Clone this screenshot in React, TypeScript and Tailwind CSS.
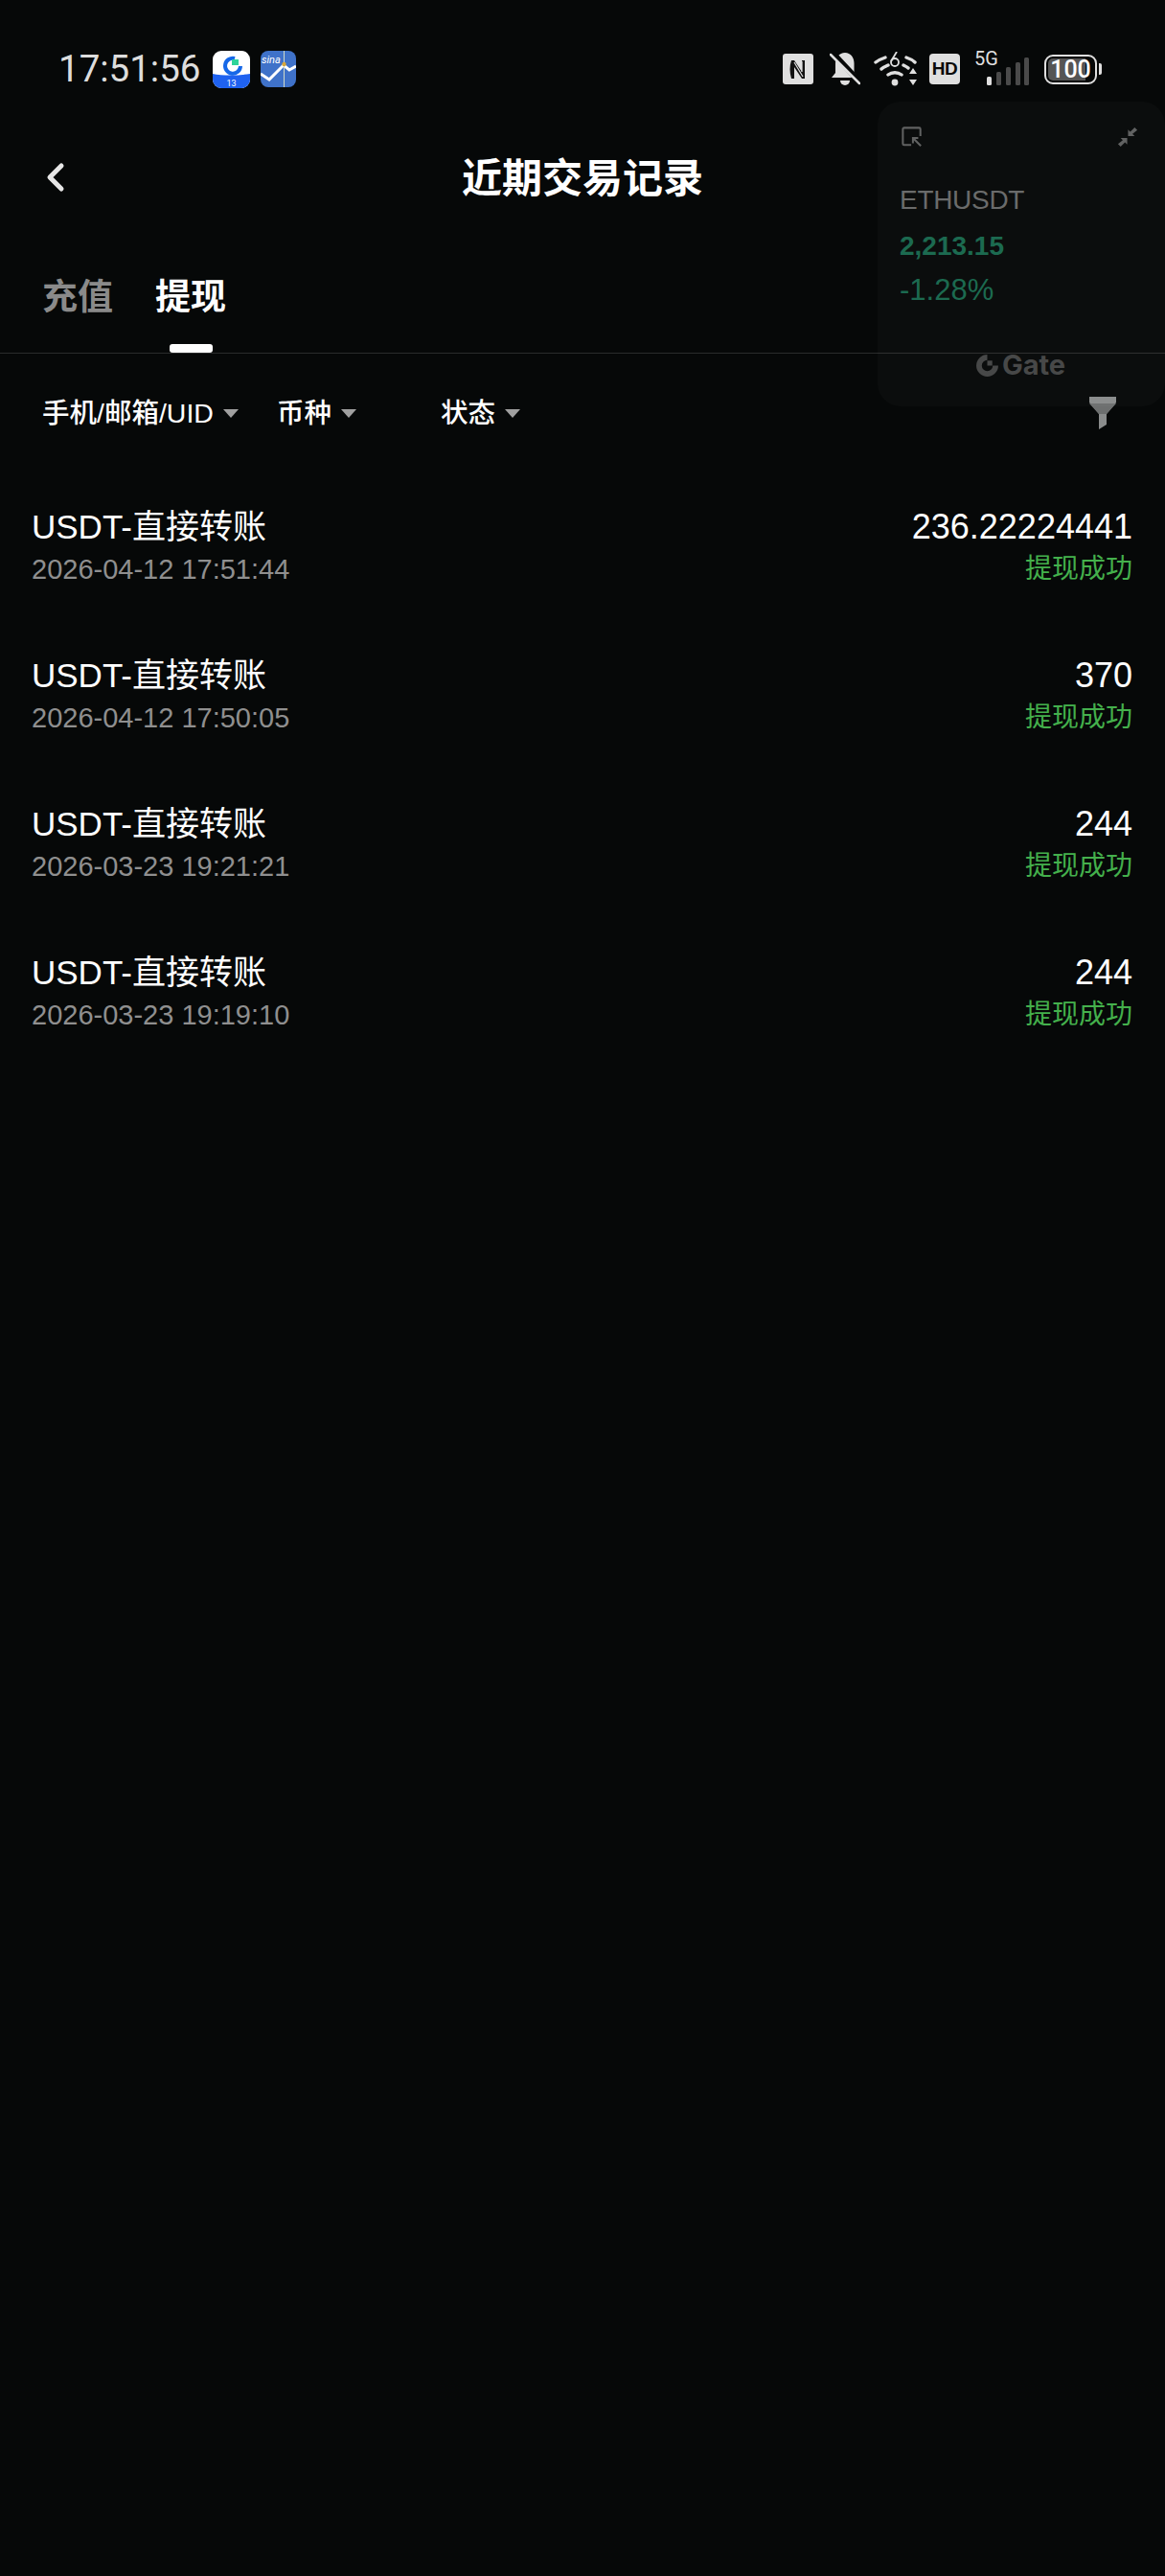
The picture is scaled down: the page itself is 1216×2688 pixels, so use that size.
import { ChevronLeft } from "lucide-react"

const FONT = "font-['Liberation_Sans','Noto_Sans_CJK_SC',sans-serif]"

const records = [
  { amount: "236.22224441", time: "2026-04-12 17:51:44" },
  { amount: "370", time: "2026-04-12 17:50:05" },
  { amount: "244", time: "2026-03-23 19:21:21" },
  { amount: "244", time: "2026-03-23 19:19:10" },
]

const filters = [
  { label: "手机/邮箱/UID", width: "w-[245px]" },
  { label: "币种", width: "w-[171px]" },
  { label: "状态", width: "w-[100px]" },
]

function NotificationIcons() {
  return (
    <div className="flex items-center gap-[11px]">
      {/* finance app tile */}
      <svg width="39" height="39" viewBox="0 0 39 39">
        <rect width="39" height="39" rx="9" fill="#fff" />
        <path d="M0 24c10 2 26 2 39 0v6a9 9 0 0 1-9 9H9a9 9 0 0 1-9-9z" fill="#1f62f0" />
        <path d="M23 8a8 8 0 1 0 6 8" fill="none" stroke="#1668e8" strokeWidth="4" />
        <rect x="20" y="9" width="7" height="6" fill="#2fd49a" />
        <text x="19.500" y="36.500" fontSize="9" fill="#fff" textAnchor="middle" fontFamily="Roboto">13</text>
      </svg>
      {/* market chart tile */}
      <svg width="37" height="38" viewBox="0 0 37 38">
        <rect width="37" height="38" rx="8" fill="#3f72c9" />
        <path d="M0 24l9 6 15-15 6 5 7-4" fill="none" stroke="#fff" strokeWidth="3" />
        <path d="M24.500 0v38" stroke="#cfd9c8" strokeWidth="1" />
        <circle cx="24.500" cy="14" r="2.200" fill="#d8a63a" />
        <text x="1" y="13" fontSize="11" fill="#fff" fontStyle="italic" fontFamily="Roboto">sina</text>
      </svg>
    </div>
  )
}

function StatusIcons() {
  return (
    <div className="flex items-center text-[#dfdfdf]">
      {/* NFC */}
      <svg width="32" height="32" viewBox="0 0 32 32" className="mr-[17px]">
        <rect width="32" height="32" rx="3" fill="#dfdfdf" />
        <path d="M9 7c-2 6-2 12 0 19l3 0V14l8 12h3V7h-3v12L12 7z" fill="#111" />
        <path d="M12 9l9 15M20 8v11" stroke="#dfdfdf" strokeWidth="1.200" fill="none" />
      </svg>
      {/* muted bell */}
      <svg width="32" height="36" viewBox="0 0 32 36" className="mr-[14px]">
        <path d="M16 1c6 0 9.500 5 9.500 11v9l4 6H2l4-5v-10C6 6 10 1 16 1z" fill="#dfdfdf" />
        <path d="M11 30h10a5 5 0 0 1-10 0z" fill="#dfdfdf" />
        <path d="M1 -1l30 32" stroke="#060808" strokeWidth="6" />
        <path d="M1 3l30 30" stroke="#dfdfdf" strokeWidth="2.500" strokeLinecap="round" />
      </svg>
      {/* wifi 6 */}
      <svg width="46" height="36" viewBox="0 0 46 36" className="mr-[12px]">
        <path d="M2 11c4-3 7-4 10-5M34 6c3 1 7 3 9 5M8 18c2-2 5-3 7-4M31 14c2 1 4 2 5 3M15 24c4-3 10-3 14 0" fill="none" stroke="#dfdfdf" strokeWidth="3.400" strokeLinecap="round" />
        <circle cx="22" cy="32" r="3.400" fill="#dfdfdf" />
        <circle cx="22" cy="11" r="4" fill="none" stroke="#dfdfdf" strokeWidth="1.800" />
        <path d="M18 10l6-10" stroke="#dfdfdf" strokeWidth="1.800" />
        <path d="M41 17l4 6h-8zM41 35l4-6h-8z" fill="#dfdfdf" />
      </svg>
      <div className={`mr-[15px] flex h-[32px] w-[32px] items-center justify-center rounded-[4px] bg-[#dfdfdf] text-[19px] font-bold tracking-[-0.5px] text-[#0a0a0a] ${FONT}`}>HD</div>
      {/* 5G signal */}
      <div className="relative mr-[15px] h-[36px] w-[58px]">
        <span className="absolute left-0 top-[-3px] font-['Roboto',sans-serif] text-[20px] leading-[20px]">5G</span>
        <svg width="46" height="30" viewBox="0 0 46 30" className="absolute bottom-0 right-0">
          <rect x="1" y="20" width="5" height="9" rx="1.500" fill="#dfdfdf" />
          <rect x="11" y="15" width="5" height="14" rx="1.500" fill="#4a4a4a" />
          <rect x="21" y="10" width="5" height="19" rx="1.500" fill="#4a4a4a" />
          <rect x="31" y="5" width="5" height="24" rx="1.500" fill="#4a4a4a" />
          <rect x="40" y="0" width="5" height="29" rx="1.500" fill="#4a4a4a" />
        </svg>
      </div>
      {/* battery */}
      <div className="flex items-center gap-[2px]">
        <div className="flex h-[31px] w-[55px] items-center justify-center rounded-[9px] border-[2.500px] border-[#dfdfdf] bg-[linear-gradient(90deg,#555_0%,#555_80%,transparent_80%)] bg-clip-content p-[2px] font-['Roboto',sans-serif] text-[25px] font-medium leading-none text-white">
          100
        </div>
        <div className="h-[12px] w-[3px] rounded-r-[2px] bg-[#dfdfdf]" />
      </div>
    </div>
  )
}

function FloatingQuote() {
  return (
    <div className={`absolute right-0 top-[106px] h-[318px] w-[300px] rounded-[24px] bg-white/[0.025] pl-[23px] pr-[28px] pt-[26px] ${FONT}`}>
      <div className="flex items-center justify-between text-[#616262]">
        <svg width="22" height="22" viewBox="0 0 24 24" fill="none" stroke="currentColor" strokeWidth="2.200" className="ml-[2px]">
          <path d="M11 21H3a1.500 1.500 0 0 1-1.500-1.500V3A1.500 1.500 0 0 1 3 1.500h17A1.500 1.500 0 0 1 21.500 3v8" />
          <path d="M22 22l-9-9M13 19v-6h6" />
        </svg>
        <svg width="22" height="22" viewBox="0 0 24 24" fill="#616262">
          <path d="M23 4l-3-3-5 5-2.500-2.500V11H20l-2.500-2.500zM1 20l3 3 5-5 2.500 2.500V13H4l2.500 2.500z" />
        </svg>
      </div>
      <div className="mt-[35px] text-[28px] leading-[40px] tracking-[-0.3px] text-[#6a6b6b]">ETHUSDT</div>
      <div className="mt-[8px] text-[28px] font-bold leading-[40px] text-[#1c6a50]">2,213.15</div>
      <div className="mt-[6px] text-[31px] leading-[40px] text-[#1c6a50]">-1.28%</div>
      <div className="mt-[43px] flex items-center justify-center gap-[3px] pl-[3px] text-[#474848]">
        <svg width="25" height="25" viewBox="0 0 24 24">
          <path d="M12 1a11 11 0 1 0 11 11h-5.500A5.500 5.500 0 1 1 12 6.500z" fill="currentColor" />
          <rect x="12" y="7" width="5" height="5" fill="currentColor" />
        </svg>
        <span className="font-['Inter',sans-serif] text-[29px] font-bold leading-[30px]">Gate</span>
      </div>
    </div>
  )
}

export default function App() {
  return (
    <div className={`relative h-[2688px] w-[1216px] overflow-hidden bg-[#060808] text-white ${FONT}`}>
      {/* Status bar */}
      <div className="flex h-[144px] items-center justify-between pl-[61px] pr-[66px]">
        <div className="flex items-center gap-[13px]">
          <span className="font-['Roboto',sans-serif] text-[38.500px] leading-none text-[#dddddd]">17:51:56</span>
          <NotificationIcons />
        </div>
        <StatusIcons />
      </div>

      {/* Header */}
      <div className="relative flex h-[86px] items-center justify-center">
        <ChevronLeft className="absolute left-[34px] top-[17px] h-[48px] w-[48px] text-[#e6e6e6]" strokeWidth={2.5} />
        <h1 className="text-[42px] font-bold leading-none">近期交易记录</h1>
      </div>

      {/* Tabs */}
      <div className="flex h-[139px] gap-[44px] border-b border-[#2a2c2c] pl-[44px] pt-[59px]">
        <span className="text-[37px] font-bold leading-[44px] text-[#8a8a8a]">充值</span>
        <div className="flex flex-col items-center">
          <span className="text-[37px] font-bold leading-[44px] text-white">提现</span>
          <div className="mt-auto h-[9px] w-[45px] rounded-[3px] bg-white" />
        </div>
      </div>

      {/* Filters */}
      <div className="flex h-[124px] items-center pl-[44px] pr-[50px]">
        {filters.map((f) => (
          <div key={f.label} className={`flex items-center gap-[10px] ${f.width}`}>
            <span className="text-[28.500px] font-medium leading-none">{f.label}</span>
            <div className="h-0 w-0 border-x-[8px] border-t-[9px] border-x-transparent border-t-[#a0a0a0]" />
          </div>
        ))}
        <svg width="30" height="34" viewBox="0 0 30 34" className="ml-auto">
          <path d="M1 0h28v6L19 18v11l-8 5V18L1 6z" fill="#8a8c8c" />
          <path d="M1 7h28L19 18H11z" fill="#6d6f6f" />
        </svg>
      </div>

      {/* Records */}
      <div className="pl-[33px] pr-[34px] pt-[35px]">
        {records.map((r) => (
          <div key={r.time} className="flex h-[155px] justify-between">
            <div>
              <div className="text-[35px] leading-[44px]">USDT-直接转账</div>
              <div className="text-[29px] leading-[44px] text-[#8f8f8f]">{r.time}</div>
            </div>
            <div className="text-right">
              <div className="text-[36px] leading-[44px]">{r.amount}</div>
              <div className="text-[28px] leading-[44px] text-[#44b04c]">提现成功</div>
            </div>
          </div>
        ))}
      </div>

      <FloatingQuote />
    </div>
  )
}
